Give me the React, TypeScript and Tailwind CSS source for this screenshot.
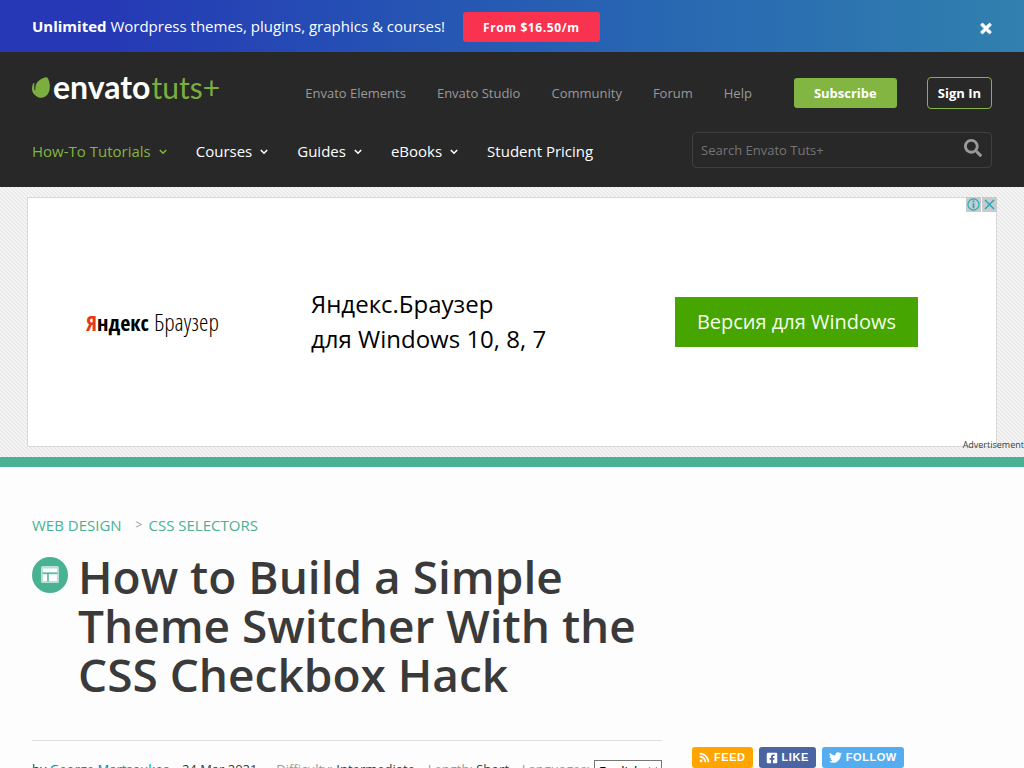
import type { ReactNode } from "react";
import { FaTimes, FaSearch, FaRss, FaFacebookSquare, FaTwitter } from "react-icons/fa";

const topLinks = ["Envato Elements", "Envato Studio", "Community", "Forum", "Help"];

const mainLinks = [
  { label: "How-To Tutorials", menu: true, active: true },
  { label: "Courses", menu: true, active: false },
  { label: "Guides", menu: true, active: false },
  { label: "eBooks", menu: true, active: false },
  { label: "Student Pricing", menu: false, active: false },
];

function Caret() {
  return (
    <svg viewBox="0 0 8 6" className="mt-0.5 h-1.5 w-2" fill="none" stroke="currentColor" strokeWidth="1.6" aria-hidden="true">
      <path d="M0.8 1 L4 4.2 L7.2 1" />
    </svg>
  );
}

function Promo() {
  return (
    <div className="flex h-13 items-center justify-between bg-linear-to-r from-[#2638b5] from-10% to-[#3180ae] px-8 text-white">
      <div className="flex items-center gap-[18px]">
        <p className="text-[15px]">
          <strong className="font-bold">Unlimited</strong> Wordpress themes, plugins, graphics &amp; courses!
        </p>
        <a href="#pricing" className="mt-0.5 flex h-[30px] items-center rounded-[3px] bg-[#f8324f] px-5 pt-0.5 text-xs font-bold tracking-wider">
          From $16.50/m
        </a>
      </div>
      <button type="button" aria-label="Close" className="mt-1">
        <FaTimes className="h-[15px] w-3 stroke-current stroke-[30px]" />
      </button>
    </div>
  );
}

function Logo() {
  return (
    <a href="#home" className="flex items-center" aria-label="Envato Tuts+">
      <svg viewBox="0 0 18 21" className="h-[21px] w-[18px]" fill="#7cad3f" aria-hidden="true">
        <path d="M14 0.2 C16 -0.4 17.4 4 17.8 8 C18.4 15 15 20.8 9.2 20.8 C5.5 20.8 3.2 18.8 3 15.5 L3 10.5 C4 5 8.6 1 14 0.2 Z" />
        <path d="M1.2 6.6 C2 5.6 2.6 6.2 2.5 7.2 C2.1 10.6 2.7 14 4.6 17 L5.4 19.6 C2 18.2 0 15.4 0 12 C0 9.6 0.5 7.8 1.2 6.6 Z" />
        <path d="M2.9 7 V13" fill="none" stroke="#282828" strokeWidth="0.8" />
      </svg>
      <span className="ml-[3px] font-['Lato'] text-[32px] leading-8 font-bold text-white">envato</span>
      <span className="ml-px font-['Lato'] text-[30px] leading-8 font-normal text-[#7cad3f]">tuts+</span>
    </a>
  );
}

function Header() {
  return (
    <header className="bg-[#282828] px-8 pt-[25px] pb-[19px]">
      <div className="flex items-center justify-between">
        <div className="-mt-3">
          <Logo />
        </div>
        <nav className="flex items-center gap-[30px] text-[13px] text-[#999]" aria-label="Envato">
          <div className="flex items-center gap-[31px]">
            {topLinks.map((t) => (
              <a key={t} href="#top" className="pt-0.5">{t}</a>
            ))}
          </div>
          <a href="#subscribe" className="ml-3 flex h-[30px] items-center rounded-[3px] bg-[#82b541] px-5 pt-0.5 font-bold text-white">
            Subscribe
          </a>
          <a href="#signin" className="flex h-8 items-center rounded border border-[#82b541] px-2.5 pt-0.5 font-bold text-white">
            Sign In
          </a>
        </nav>
      </div>
      <div className="mt-[23px] flex items-center justify-between">
        <nav className="mt-0.5 flex items-center gap-[29px] text-[15px]" aria-label="Main">
          {mainLinks.map((l) => (
            <a key={l.label} href="#main" className={l.active ? "flex items-center gap-2 text-[#82b541]" : "flex items-center gap-2 text-white"}>
              {l.label}
              {l.menu && <Caret />}
            </a>
          ))}
        </nav>
        <form className="flex h-9 w-[300px] items-center rounded border border-[#3f3f3f] pr-[9px] pl-2">
          <input
            type="search"
            aria-label="Search Envato Tuts+"
            placeholder="Search Envato Tuts+"
            className="min-w-0 flex-1 bg-transparent pt-0.5 text-[13px] text-white outline-none placeholder:text-[#757575]"
          />
          <button type="button" aria-label="Search" className="mb-1 text-[#999]">
            <FaSearch className="size-[18px]" />
          </button>
        </form>
      </div>
    </header>
  );
}

function Ad() {
  return (
    <section className="relative border-b-10 border-[#49b293] bg-[#f5f5f5] bg-[linear-gradient(45deg,#e9e9e9_25%,#f6f6f6_25%,#f6f6f6_50%,#e9e9e9_50%,#e9e9e9_75%,#f6f6f6_75%)] bg-size-[4px_4px] py-2.5">
      <div className="relative mx-auto flex h-[250px] w-full max-w-[970px] items-center border border-[#d8d8d8] bg-white pr-[78px] pl-[58px]">
        <div className="w-[225px] font-['Open_Sans_Condensed','Liberation_Sans_Narrow',sans-serif] text-[22px] leading-9 whitespace-nowrap text-black">
          <span className="font-bold"><span className="text-[#e8381b]">Я</span>ндекс</span>{" "}
          <span className="font-['Open_Sans_Condensed_Light','Liberation_Sans_Narrow',sans-serif] text-[24px] font-light">Браузер</span>
        </div>
        <p className="flex-1 pb-0.5 text-[24px] leading-[35px] text-black">
          Яндекс.Браузер
          <br />
          для Windows 10, 8, 7
        </p>
        <a href="#download" className="flex h-[50px] w-[243px] items-center justify-center bg-[#46a500] text-[20px] text-[#f4ffea]">
          Версия для Windows
        </a>
        <div className="absolute -top-px -right-px flex gap-px">
          <button type="button" aria-label="Ad information" className="size-[15px] bg-[#c9cbcb]">
            <svg viewBox="0 0 15 15" fill="none" stroke="#10abc9" strokeWidth="1.1">
              <circle cx="7.5" cy="7.5" r="5.6" />
              <path d="M7.5 3.6 V5.2 M7.5 6.3 V11.2" strokeWidth="1.7" />
            </svg>
          </button>
          <button type="button" aria-label="Close ad" className="size-[15px] bg-[#c9cbcb]">
            <svg viewBox="0 0 15 15" fill="none" stroke="#10abc9" strokeWidth="1.4">
              <path d="M3 3 L12 12 M12 3 L3 12" />
            </svg>
          </button>
        </div>
      </div>
      <span className="absolute right-0 bottom-1.5 text-[9px] leading-3 text-[#3a3a3a]">Advertisement</span>
    </section>
  );
}

function TopicIcon() {
  return (
    <svg viewBox="0 0 36 36" className="mt-[5px] size-9 shrink-0" aria-hidden="true">
      <circle cx="18" cy="18" r="18" fill="#49b293" />
      <rect x="9" y="9" width="18" height="17" rx="1.5" fill="#b9e0d4" />
      <rect x="11" y="11.5" width="14" height="4" fill="#fff" />
      <rect x="11" y="17.5" width="4" height="6.5" fill="#fff" />
      <rect x="17" y="17.5" width="8" height="6.5" fill="#fff" />
      <path d="M10.5 16.2 H25.5 M16 16.5 V24.5" stroke="#49b293" strokeWidth="1.2" />
    </svg>
  );
}

function Share({ icon, children, className }: { icon: ReactNode; children: ReactNode; className: string }) {
  return (
    <a href="#share" className={`flex h-[21px] items-center gap-1 rounded-[3px] px-[7px] font-['Liberation_Sans',sans-serif] text-[11px] font-bold tracking-wider text-white ${className}`}>
      {icon}
      {children}
    </a>
  );
}

export default function App() {
  return (
    <div className="min-h-screen bg-[#fdfdfd] font-['Open_Sans','Noto_Sans',sans-serif]">
      <Promo />
      <Header />
      <Ad />
      <main className="flex gap-[30px] px-8 pt-[46px]">
        <article className="min-w-0 flex-1">
          <nav className="flex items-center text-[15px] leading-6 text-[#49b293]" aria-label="Breadcrumb">
            <a href="#web">WEB DESIGN</a>
            <span className="mr-1.5 ml-3.5 text-xs text-[#999]">&gt;</span>
            <a href="#css">CSS SELECTORS</a>
          </nav>
          <div className="mt-[15px] flex gap-2.5">
            <TopicIcon />
            <h1 className="text-[46px] leading-[49px] font-semibold text-[#3a3a3a]">
              How to Build a Simple Theme Switcher With the CSS Checkbox Hack
            </h1>
          </div>
          <div className="mt-[41px] flex items-start justify-between border-t border-[#e1e1e1] pt-[18px] text-[13px] leading-5 whitespace-nowrap text-[#3a3a3a]">
            <span>by <a href="#author" className="text-[#0085b6]">George Martsoukos</a></span>
            <time dateTime="2021-03-24" className="mr-1.5">24 Mar 2021</time>
            <span><span className="text-[#999]">Difficulty:</span> Intermediate</span>
            <span><span className="text-[#999]">Length:</span> Short</span>
            <label className="flex items-start gap-1">
              <span className="text-[#999]">Languages:</span>
              <select className="mt-px h-5 w-[68px] border border-[#767676] bg-white pb-1 text-[13px] leading-4 text-black">
                <option>English</option>
              </select>
            </label>
          </div>
        </article>
        <aside className="flex w-[300px] items-start gap-1.5 pt-[234px]">
          <Share className="bg-[#ffa500]" icon={<FaRss className="size-[11px]" />}>FEED</Share>
          <Share className="bg-[#4b65a3]" icon={<FaFacebookSquare className="size-3" />}>LIKE</Share>
          <Share className="bg-[#55acee]" icon={<FaTwitter className="size-[13px]" />}>FOLLOW</Share>
        </aside>
      </main>
    </div>
  );
}
